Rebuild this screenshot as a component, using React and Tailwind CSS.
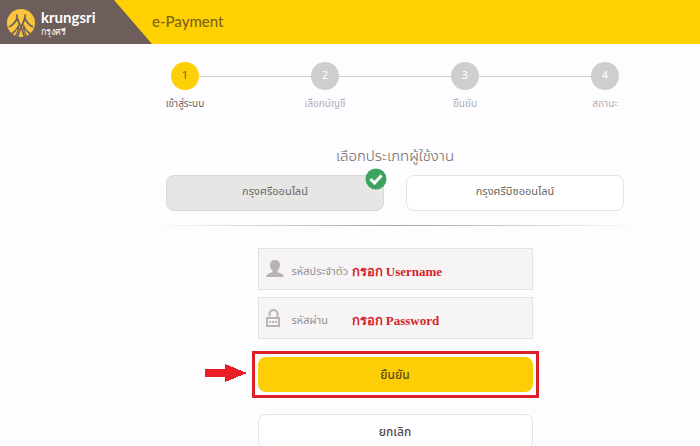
import { useState } from 'react';
import clsx from 'clsx';

const STEPS = ['เข้าสู่ระบบ', 'เลือกบัญชี', 'ยืนยัน', 'สถานะ'];

const USER_TYPES = [
	{ id: 'online', label: 'กรุงศรีออนไลน์' },
	{ id: 'biz', label: 'กรุงศรีบิซออนไลน์' },
];

const Logo = () => (
	<svg viewBox="0 0 84 84" className="size-7 shrink-0" aria-hidden="true">
		<circle cx="42" cy="42" r="42" fill="#f8c53c" />
		<g fill="none" stroke="#6d5d5b" strokeWidth="5">
			<path d="M29 16 C30 30 35 42 42 54 C49 42 54 30 55 16" />
			<path d="M30 28 C25 40 17 48 6 54" />
			<path d="M54 28 C59 40 67 48 78 54" />
			<path d="M42 54 C38 64 34 74 32 84" />
			<path d="M42 54 C46 64 50 74 52 84" />
		</g>
		<path d="M34 44 C30 58 22 66 12 72 L28 84 L37 56z" fill="#6d5d5b" />
		<path d="M50 44 C54 58 62 66 72 72 L56 84 L47 56z" fill="#6d5d5b" />
		<path d="M31 58 C28 67 23 72 17 75 L24 80 C28 74 31 66 31 58z" fill="#f8c53c" />
		<path d="M53 58 C56 67 61 72 67 75 L60 80 C56 74 53 66 53 58z" fill="#f8c53c" />
	</svg>
);

const UserIcon = () => (
	<svg viewBox="0 0 18 18" className="h-[18px] w-[18px] shrink-0" fill="#b9b4b4" aria-hidden="true">
		<path d="M9 0c3.200 0 5 2 5 5 0 2.200-1 4.300-2.400 5.400v1.600c1 1 5.900 1.400 6.400 5H0c.5-3.600 5.400-4 6.400-5v-1.600C5 9.300 4 7.200 4 5c0-3 1.800-5 5-5z" />
	</svg>
);

const LockIcon = () => (
	<svg viewBox="0 0 18 20" className="h-5 w-[18px] shrink-0" fill="none" stroke="#b9b4b4" aria-hidden="true">
		<path d="M3.500 8V6a4 4 0 0 1 8 0v4" strokeWidth="2" />
		<rect x="1" y="10" width="12" height="8" strokeWidth="2" />
		<path d="M3 14h8" strokeWidth="2" strokeDasharray="2 1" />
	</svg>
);

const Field = ({ id, type, label, hint, icon }) => (
	<div className="flex h-[42px] items-center border border-[#e4e2e3] bg-[#f6f4f5] pl-[7px]">
		{icon}
		<label htmlFor={id} className="ml-2 w-[60px] shrink-0 whitespace-nowrap pt-[6px] text-[11px] text-[#959092]">
			{label}
		</label>
		<input
			id={id}
			type={type}
			placeholder={hint}
			className="min-w-0 flex-1 bg-transparent pt-[6px] font-['Liberation_Serif',serif] text-[13px] font-bold text-[#d3242b] placeholder:text-[#d3242b] focus:outline-none"
		/>
	</div>
);

const App = () => {
	const [userType, setUserType] = useState('online');

	return (
		<div className="h-screen overflow-hidden bg-[#fdfcfe] font-['Noto_Sans_Thai','Noto_Sans',sans-serif] text-[#6b6665]">
			<header className="flex h-11 bg-[#ffd103]">
				<div className="flex w-[152px] items-center gap-[6px] bg-[#6d5d5b] pt-[2px] pl-[7px] font-['Lato',sans-serif] text-white [clip-path:polygon(0_0,114px_0,100%_100%,0_100%)]">
					<Logo />
					<div className="flex flex-col">
						<span className="text-[15px] leading-[18px] font-bold">krungsri</span>
						<span className="text-[9px] leading-3">กรุงศรี</span>
					</div>
				</div>
				<h1 className="font-['Lato',sans-serif] text-[15px] leading-[42px] font-medium text-[#7b6419]">e-Payment</h1>
			</header>

			<main className="flex flex-col items-center pl-[90px]">
				<ol className="mt-[18px] grid w-full max-w-[560px] grid-cols-4">
					{STEPS.map((step, index) => (
						<li key={step} className="flex flex-col items-center">
							<div className="flex w-full items-center">
								<span className={clsx('h-px flex-1', index > 0 && 'bg-[#cfcdcf]')} />
								<span
									className={clsx(
										'flex size-7 items-center justify-center rounded-full text-[11px]',
										index === 0 ? 'bg-[#fdcf06] text-[#7b6419]' : 'bg-[#cfcecf] text-white'
									)}>
									{index + 1}
								</span>
								<span className={clsx('h-px flex-1', index < 3 && 'bg-[#cfcdcf]')} />
							</div>
							<span className={clsx('mt-1 text-[10px] leading-5', index === 0 ? 'text-[#6b6665]' : 'text-[#b3b0b2]')}>
								{step}
							</span>
						</li>
					))}
				</ol>

				<h2 className="mt-[31px] text-[15px] leading-6 font-light">เลือกประเภทผู้ใช้งาน</h2>
				<div className="mt-[6px] grid w-full max-w-[458px] grid-cols-2 gap-[22px]">
					{USER_TYPES.map(({ id, label }) => (
						<button
							key={id}
							type="button"
							aria-pressed={userType === id}
							onClick={() => setUserType(id)}
							className={clsx(
								'relative h-9 rounded-lg border pb-[2px] text-[11px]',
								userType === id ? 'border-[#d9d9d9] bg-[#e6e6e5]' : 'border-[#e5e3e8] bg-white'
							)}>
							{label}
							{userType === id && (
								<svg viewBox="0 0 22 22" className="absolute -top-2 -right-1 size-[22px]" aria-hidden="true">
									<circle cx="11" cy="11" r="10.500" fill="#3ba55f" />
									<path d="M5.500 11l4 4 7-7.500" fill="none" stroke="#fff" strokeWidth="3" />
								</svg>
							)}
						</button>
					))}
				</div>
				<div className="mt-[14px] h-px w-full max-w-[488px] bg-linear-to-r from-transparent via-[#a5a3a5] to-transparent" />

				<form className="mt-[22px] flex w-full max-w-[275px] flex-col gap-[7px]" onSubmit={(e) => e.preventDefault()}>
					<Field id="username" type="text" label="รหัสประจำตัว" hint="กรอก Username" icon={<UserIcon />} />
					<Field id="password" type="password" label="รหัสผ่าน" hint="กรอก Password" icon={<LockIcon />} />
					<div className="relative -mx-[6px] mt-[5px] border-[3px] border-[#dc2027] p-[3px]">
						<svg
							viewBox="0 0 42 18"
							className="absolute top-[10px] right-full mr-2 h-[18px] w-[42px]"
							shapeRendering="crispEdges"
							aria-hidden="true">
							<path d="M0 5h20V0l22 9-22 9v-5H0z" fill="#ea1c24" />
						</svg>
						<button type="submit" className="block h-[35px] w-full rounded-lg bg-[#fdcd06] text-xs font-medium text-[#5c4a1c]">
							ยืนยัน
						</button>
					</div>
					<button type="button" className="mt-[9px] h-9 rounded-lg border border-[#e5e3e8] bg-white text-xs font-medium text-[#4f4b4b]">
						ยกเลิก
					</button>
				</form>
			</main>
		</div>
	);
};

export default App;
